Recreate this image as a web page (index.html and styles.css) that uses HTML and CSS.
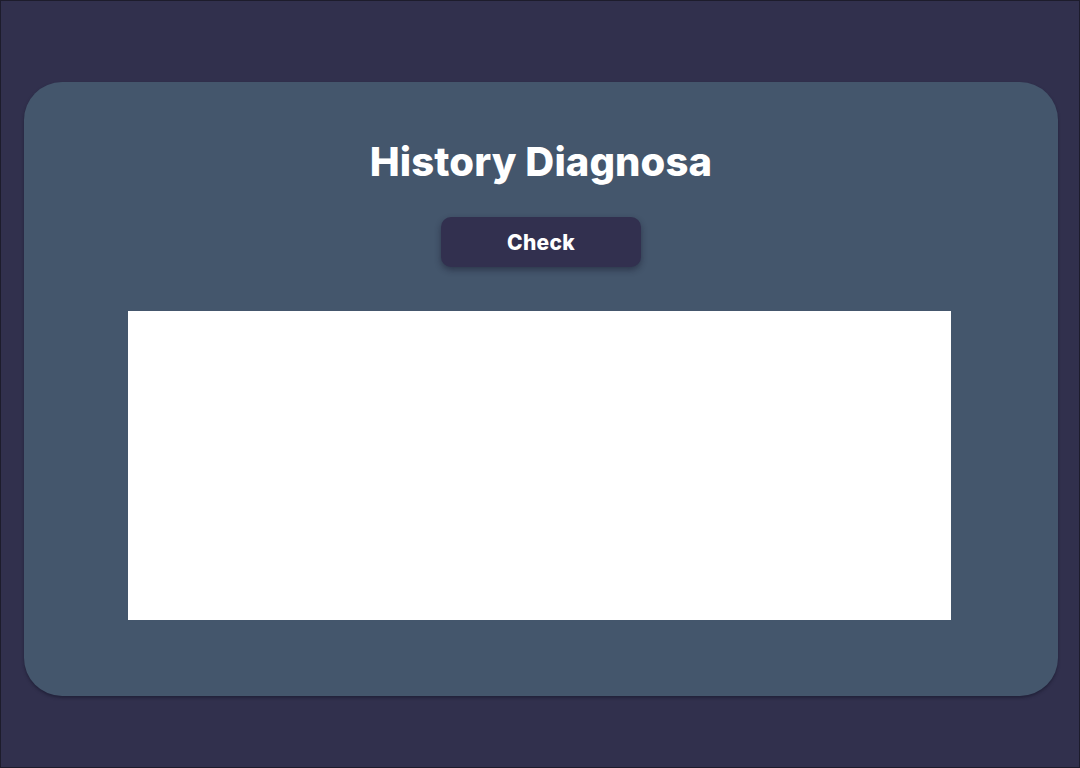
FILE: index.html
```html
<!DOCTYPE html>
<html lang="id">
<head>
<meta charset="utf-8">
<title>History Diagnosa</title>
<link rel="stylesheet" href="styles.css">
</head>
<body>
<main class="page">
  <section class="card">
    <h1 class="title">History Diagnosa</h1>
    <button class="btn" type="button">Check</button>
    <div class="result"></div>
  </section>
</main>
</body>
</html>
```
FILE: styles.css
```css
* { box-sizing: border-box; }
html, body { margin: 0; padding: 0; }
body {
  width: 1080px;
  height: 768px;
  background: #31304d;
  border: 1px solid #1d1c2c;
  font-family: Inter, "Open Sans", sans-serif;
  overflow: hidden;
}
.page {
  padding: 81px 21px 0 23px;
}
.card {
  height: 614px;
  background: #44566c;
  border-radius: 38px;
  box-shadow: 0 2px 3px rgba(20, 20, 40, 0.5);
  display: flex;
  flex-direction: column;
  align-items: center;
  padding-top: 56px;
}
.title {
  margin: 0;
  color: #ffffff;
  font-size: 40px;
  font-weight: 800;
  line-height: 48px;
  letter-spacing: 0.1px;
}
.btn {
  margin-top: 31px;
  width: 200px;
  height: 50px;
  border: none;
  border-radius: 10px;
  background: #32304f;
  color: #ffffff;
  font-family: inherit;
  font-size: 21px;
  font-weight: 800;
  letter-spacing: 0.3px;
  box-shadow: 0 3px 6px rgba(20, 20, 40, 0.45);
}
.result {
  align-self: flex-start;
  margin-top: 44px;
  margin-left: 104px;
  width: 823px;
  height: 309px;
  background: #ffffff;
}
```
